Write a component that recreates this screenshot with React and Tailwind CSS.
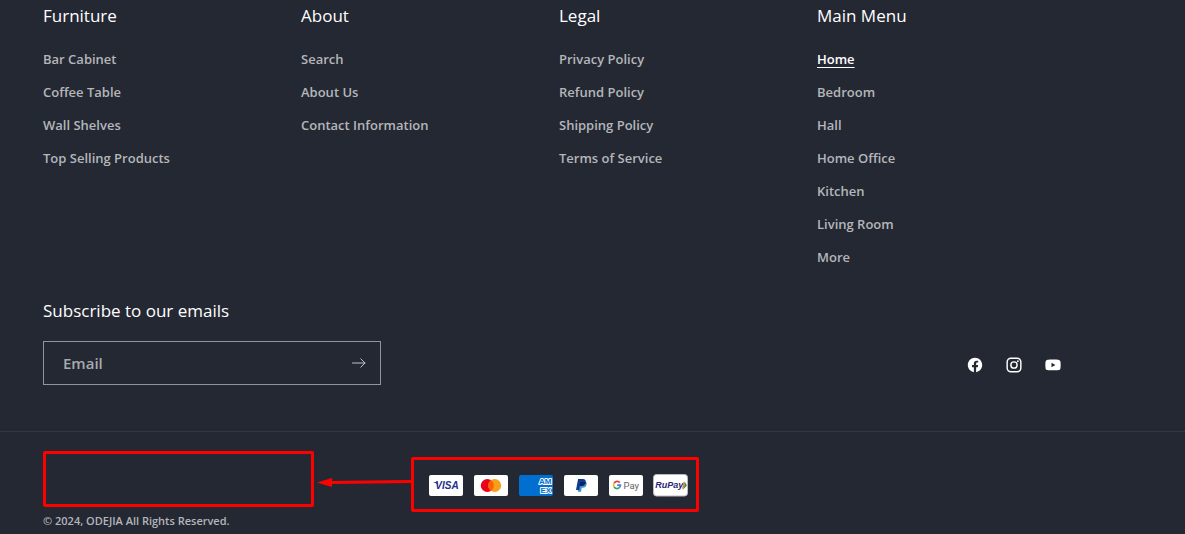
import React from "react";

const columns = [
  { title: "Furniture", links: ["Bar Cabinet", "Coffee Table", "Wall Shelves", "Top Selling Products"] },
  { title: "About", links: ["Search", "About Us", "Contact Information"] },
  { title: "Legal", links: ["Privacy Policy", "Refund Policy", "Shipping Policy", "Terms of Service"] },
  {
    title: "Main Menu",
    active: "Home",
    links: ["Home", "Bedroom", "Hall", "Home Office", "Kitchen", "Living Room", "More"],
  },
];

function LinkColumn({ title, links, active }) {
  return (
    <nav aria-label={title}>
      <h2 className="text-[17px] leading-6 font-medium text-white">{title}</h2>
      <ul className="mt-[14px]">
        {links.map((label) => (
          <li key={label} className="flex h-[33px] items-center text-[13px] leading-[18px] font-semibold">
            <a
              href="#"
              aria-current={label === active ? "page" : undefined}
              className={label === active ? "text-white underline underline-offset-[3px]" : "text-[#b4b6ba]"}
            >
              {label}
            </a>
          </li>
        ))}
      </ul>
    </nav>
  );
}

function FacebookIcon() {
  return (
    <svg viewBox="0 0 20 20" className="size-[18px]" fill="#fff" aria-hidden="true">
      <path d="M18 10.049C18 5.603 14.419 2 10 2s-8 3.603-8 8.049C2 14.067 4.925 17.396 8.75 18v-5.624H6.719v-2.328h2.03V8.275c0-2.017 1.195-3.132 3.023-3.132.874 0 1.79.158 1.79.158v1.98h-1.009c-.994 0-1.303.621-1.303 1.258v1.51h2.219l-.355 2.326H11.25V18c3.825-.604 6.75-3.933 6.75-7.951Z" />
    </svg>
  );
}

function InstagramIcon() {
  return (
    <svg viewBox="0 0 20 20" className="size-[18px]" fill="none" stroke="#fff" strokeWidth="1.6" aria-hidden="true">
      <rect x="2.4" y="2.4" width="15.2" height="15.2" rx="4.2" />
      <circle cx="10" cy="10" r="3.5" />
      <circle cx="14.3" cy="5.7" r="1" fill="#fff" stroke="none" />
    </svg>
  );
}

function YoutubeIcon() {
  return (
    <svg viewBox="0 0 20 20" className="size-[18px]" aria-hidden="true">
      <path
        fill="#fff"
        fillRule="evenodd"
        d="M18.16 5.87c.34 1.309.34 4.08.34 4.08s0 2.771-.34 4.08a2.125 2.125 0 0 1-1.53 1.53c-1.309.34-6.63.34-6.63.34s-5.321 0-6.63-.34a2.125 2.125 0 0 1-1.53-1.53c-.34-1.309-.34-4.08-.34-4.08s0-2.771.34-4.08a2.173 2.173 0 0 1 1.53-1.53C4.679 4 10 4 10 4s5.321 0 6.63.34a2.173 2.173 0 0 1 1.53 1.53ZM8.3 12.5l4.42-2.55L8.3 7.4v5.1Z"
      />
    </svg>
  );
}

function Card({ label, children }) {
  return (
    <svg viewBox="0 0 34 21" className="h-[21px] w-[34px] shrink-0 overflow-visible" role="img" aria-label={label}>
      {children}
    </svg>
  );
}

const brandFont = '"Liberation Sans", Arial, sans-serif';

function PaymentMethods() {
  return (
    <div className="flex items-center gap-[11px]">
      <Card label="Visa">
        <rect width="34" height="21" rx="2" fill="#fff" />
        <text x="18" y="14" textAnchor="middle" fontFamily={brandFont} fontSize="10" fontWeight="700" fontStyle="italic" fill="#23308c">
          VISA
        </text>
        <path d="M4.4 6.9h3.1c.7 0 .9.3 1 .8l.6 2.9C8.2 9 6.7 7.8 4.4 7.2Z" fill="#23308c" />
      </Card>
      <Card label="Mastercard">
        <rect width="34" height="21" rx="2" fill="#fff" />
        <circle cx="13.3" cy="10.5" r="6.5" fill="#eb001b" />
        <circle cx="20.7" cy="10.5" r="6.5" fill="#f79e1b" />
        <path d="M17 5.15a6.5 6.5 0 0 1 0 10.7 6.5 6.5 0 0 1 0-10.7Z" fill="#ff5f00" />
      </Card>
      <Card label="American Express">
        <rect width="34" height="21" rx="2" fill="#006fcf" />
        <g
          fontFamily={brandFont}
          fontSize="8"
          fontWeight="700"
          fill="#006fcf"
          stroke="#fff"
          strokeWidth="2"
          strokeLinejoin="round"
          paintOrder="stroke"
        >
          <text x="20" y="9">AM</text>
          <text x="21.500" y="18">EX</text>
        </g>
      </Card>
      <Card label="PayPal">
        <rect width="34" height="21" rx="2" fill="#fff" />
        <path d="M15.6 6.4h4.5c2 0 2.9 1.2 2.5 3.1-.5 2.3-1.9 3.3-4 3.3h-.9l-.7 4h-3.2Z" fill="#3a94d6" />
        <path d="M14.1 4h4.7c2.3 0 3.3 1.3 2.9 3.3-.5 2.5-2.1 3.7-4.4 3.7h-1.4l-.7 4H12Z" fill="#12398a" />
        <path d="M16.3 7h5c.4 0 .6.1.4.6-.5 2.3-2.1 3.4-4.2 3.4h-1.9Z" fill="#0a2463" />
      </Card>
      <Card label="Google Pay">
        <rect width="34" height="21" rx="2" fill="#fff" />
        <g fill="none" strokeWidth="1.7">
          <path d="M10.8 7.6A3.4 3.4 0 0 0 5.1 8.4" stroke="#ea4335" />
          <path d="M5.1 8.4a3.4 3.4 0 0 0 0 3.4" stroke="#fbbc04" />
          <path d="M5.1 11.8a3.4 3.4 0 0 0 5.2.9" stroke="#34a853" />
          <path d="M8.1 10.1h3.4a3.4 3.4 0 0 1-1.2 2.6" stroke="#4285f4" />
        </g>
        <text x="14.5" y="13.5" fontFamily="Roboto, sans-serif" fontSize="9.5" fill="#5f6368">
          Pay
        </text>
      </Card>
      <Card label="RuPay">
        <rect x="-0.5" y="-0.5" width="34" height="21.5" rx="3" fill="#fff" stroke="#b9bbc4" strokeWidth="1" />
        <text x="1.2" y="13.3" fontFamily={brandFont} fontSize="9" fontWeight="700" fontStyle="italic" fill="#2a2878">
          RuPay
        </text>
        <path d="M30.6 6.5 32.9 10.5 29.2 14.5Z" fill="#16914b" />
        <path d="M29.4 6.5 31.6 10.5 28 14.5Z" fill="#f08030" />
      </Card>
    </div>
  );
}

export default function App() {
  return (
    <footer className="min-h-screen bg-[#242833] pt-1 font-['Open_Sans','Noto_Sans',sans-serif]">
      <div className="grid grid-cols-4 pr-[110px] pl-[43px]">
        {columns.map((column) => (
          <LinkColumn key={column.title} {...column} />
        ))}
      </div>

      <div className="mt-[26px] flex items-end justify-between pr-[123px] pb-[46px] pl-[43px]">
        <form onSubmit={(event) => event.preventDefault()}>
          <h2 className="text-[17px] leading-6 font-medium text-white">Subscribe to our emails</h2>
          <div className="mt-[18px] flex h-11 w-[338px] items-center border border-[#92949a] pr-3 text-[15px] font-semibold text-[#a9abb0]">
            <label htmlFor="email" className="pl-[19px]">Email</label>
            <input id="email" type="email" className="min-w-0 flex-1 bg-transparent px-2 outline-none" />
            <button type="submit" aria-label="Subscribe" className="flex size-[18px] items-center justify-center">
              <svg viewBox="0 0 14 10" className="h-[10px] w-[14px]" fill="none" stroke="#c0c2c5" aria-hidden="true">
                <path d="M0.5 5H13M8.8 0.8 13 5 8.8 9.2" strokeLinecap="round" strokeLinejoin="round" />
              </svg>
            </button>
          </div>
        </form>
        <ul className="mb-[11px] flex gap-[21px]">
          <li><a href="#" aria-label="Facebook" className="block"><FacebookIcon /></a></li>
          <li><a href="#" aria-label="Instagram" className="block"><InstagramIcon /></a></li>
          <li><a href="#" aria-label="YouTube" className="block"><YoutubeIcon /></a></li>
        </ul>
      </div>

      <div className="border-t border-[#333742] pt-[19px] pl-[43px]">
        <div className="flex h-[62px] items-start">
          <div className="h-14 w-[271px] rounded-[2px] border-3 border-[#ff0000]" />
          <svg viewBox="0 0 97 20" className="mt-[21px] h-5 w-[97px]" aria-hidden="true">
            <path d="M15 10.5 97 9.5" stroke="#ff0000" strokeWidth="3" />
            <path d="M3 10.5 18 6V15Z" fill="#ff0000" />
          </svg>
          <div className="mt-[6px] flex h-[55px] w-[288px] items-center rounded-[2px] border-3 border-[#ff0000] pt-[2px] pl-[15px]">
            <PaymentMethods />
          </div>
        </div>
        <small className="block text-[11px] leading-4 font-semibold text-[#b4b6ba]">© 2024, ODEJIA All Rights Reserved.</small>
      </div>
    </footer>
  );
}
